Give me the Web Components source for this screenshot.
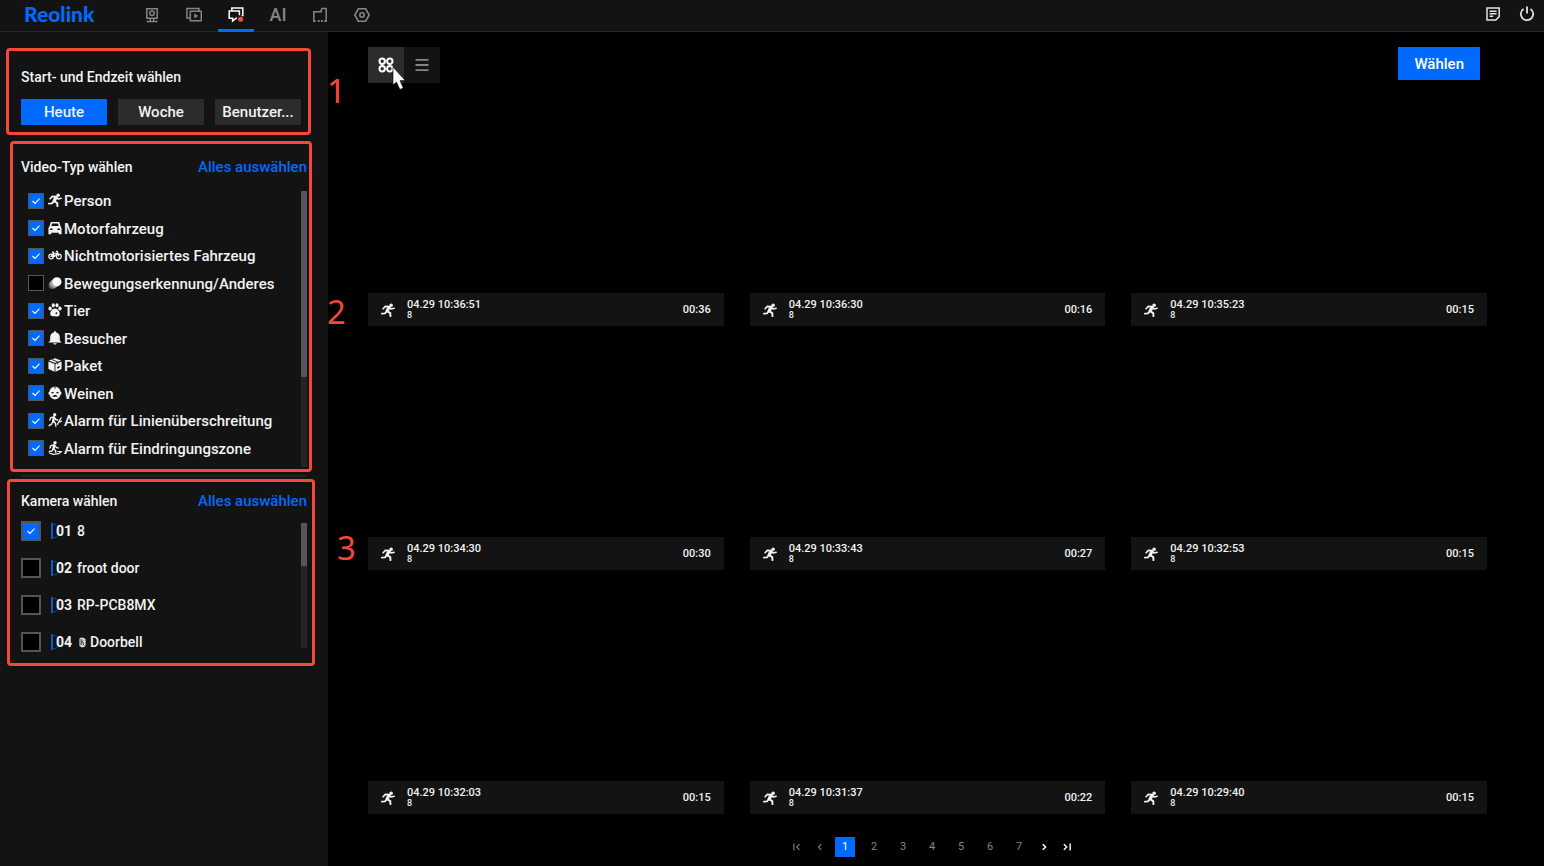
<!DOCTYPE html>
<html lang="de">
<head>
<meta charset="utf-8">
<title>Reolink</title>
<style>
  :root {
    --blue: #006aff;
    --panel: #131313;
    --line: #272727;
    --control: #2c2c2c;
    --note: #f4483b;
  }
  html, body {
    height: 100%;
    margin: 0;
  }
  body {
    background: #000;
    color: #f2f2f2;
    font: 500 15px/20px Roboto, "Liberation Sans", sans-serif;
  }
</style>
</head>
<body>
<recordings-app></recordings-app>

<script>
const ICONS = {
  camera: '<g fill="none" stroke="currentColor" stroke-width="1.5"><path d="M2.800 1.800h10.400v9.400H2.800z"/><circle cx="8" cy="6.300" r="2.200"/><path d="M6.300 11.400v3M9.700 11.400v3M2.500 14.600h11"/></g>',
  playback: '<g fill="none" stroke="currentColor" stroke-width="1.5"><path d="M4.300 4.300h11v9.400h-11z"/><path d="M13 4V1.500H.9V11h3"/></g><path d="M8.300 6.400v5.200l4-2.600z" fill="currentColor"/>',
  alarm: '<g fill="none" stroke="currentColor" stroke-width="1.5"><path d="M9 11.300H8L4.600 14V11.300H1.200V4.100h10.200v4.200"/><path d="M3.800 4V1h11v7.600h-1.200"/></g><circle cx="12.600" cy="12.200" r="2.500" fill="#f5503f"/>',
  store: '<path d="M3.800 14.200H1.800V4.800h7.400V2.800L10.200 1.600h4v12.600h-2" fill="none" stroke="currentColor" stroke-width="1.500"/><path d="M5.800 13h1.800v2H5.800zM9 13h1.800v2H9z" fill="currentColor"/>',
  settings: '<g fill="none" stroke="currentColor" stroke-width="1.600"><path d="M4.400 1.800h7.200L15.200 8l-3.600 6.200H4.400L.8 8z"/><circle cx="8" cy="8" r="2.200"/></g>',
  notes: '<g fill="none" stroke="currentColor" stroke-width="1.500"><path d="M2 2h12.200v8.600L10.800 14H2z"/><path d="M4.600 5.200h7M4.600 7.700h7M4.600 10.200h3.600"/></g>',
  power: '<g fill="none" stroke="currentColor" stroke-width="1.800"><path d="M4.500 2.900a6.200 6.200 0 1 0 7 0"/><path d="M8 .6v7"/></g>',
  grid: '<g fill="none" stroke="currentColor" stroke-width="2"><circle cx="4.200" cy="4.200" r="2.700"/><circle cx="11.800" cy="4.200" r="2.700"/><circle cx="4.200" cy="11.800" r="2.700"/><circle cx="11.800" cy="11.800" r="2.700"/></g>',
  list: '<path d="M1.500 2.800h13M1.500 8h13M1.500 13.200h13" stroke="currentColor" stroke-width="1.800"/>',
  person: '<g fill="none" stroke="currentColor" stroke-linejoin="round" stroke-linecap="round"><path d="M9.200 5 7 9" stroke-width="3.600"/><path d="M9 4.200 5 3.900 2.400 6.600M10 5.400l1.800 1.500 3.200-.9" stroke-width="1.900"/><path d="m7.400 9.400 3.200 2.200.2 3.400M6.500 9.600l-2 2.300-3.500.2" stroke-width="2.200"/></g><circle cx="11.600" cy="2.500" r="2" fill="currentColor"/>',
  car: '<path fill="currentColor" fill-rule="evenodd" d="M3.200 1h9.600l1.600 5.400L15.500 8v7h-3.200v-1.600H3.700V15H.5V8l1.100-1.600zM4.700 2.800l-.9 3h8.400l-.9-3zM2.400 8.600v1.700h2.800V8.600zM10.800 8.600v1.700h2.800V8.600z"/>',
  bike: '<g fill="none" stroke="currentColor" stroke-width="1.400"><circle cx="3.600" cy="9.600" r="2.700"/><circle cx="12.400" cy="9.600" r="2.700"/><path d="M3.600 9.600 6 6h4.600l-3 3.600zM6 6l1.800 3.600M9 3.800h1.500l1.900 5.800M4.600 4.600h2.300"/></g>',
  motion: '<circle cx="5.300" cy="10.200" r="4.600" fill="#666"/><circle cx="7.300" cy="8.600" r="4.800" fill="#aaa"/><circle cx="10.200" cy="6.600" r="5.200" fill="#fff"/>',
  animal: '<g fill="currentColor"><ellipse cx="2.400" cy="6.200" rx="1.900" ry="2.300"/><ellipse cx="6" cy="2.700" rx="1.800" ry="2.300"/><ellipse cx="10.300" cy="2.700" rx="1.800" ry="2.300"/><ellipse cx="13.700" cy="6.200" rx="1.900" ry="2.300"/><path d="M8 6.200c3 0 5.400 3.200 5.400 6 0 3.600-3.200 3.400-5.400 3s-5.400.6-5.400-3c0-2.800 2.400-6 5.400-6z"/></g><circle cx="9.600" cy="11.600" r="1" fill="#131313"/>',
  visitor: '<path fill="currentColor" d="M8 .3c.8 0 1.300.6 1.300 1.300 2.700.6 4.200 2.700 4.200 5.200v4l2 2.400H.5l2-2.400v-4c0-2.500 1.500-4.600 4.200-5.200C6.700.9 7.200.3 8 .3zM6 14h4c-.3 2-3.700 2-4 0z"/>',
  parcel: '<path fill="currentColor" d="m8 .2 7 2.600-7 2.900L1 2.800zM.5 3.900l7 2.900v9l-7-3.100zM15.500 3.900v8.800l-7 3.100v-9z"/><path d="m4.300 1.700 6.800 2.800v2.800" stroke="#131313" stroke-width="1" fill="none"/><path d="m10.500 10.300 2.800-1.200v2l-2.800 1.200z" fill="#131313"/>',
  cry: '<path fill="currentColor" d="M8 .8c3.600 0 6 2.600 6.300 5.600 1.700.5 1.700 3.200 0 3.700-.6 2.900-3.300 5.300-6.300 5.300s-5.700-2.400-6.300-5.300C0 9.600 0 6.900 1.700 6.400 2 3.400 4.400.8 8 .8z"/><path d="M4 7.600h2.400M9.600 7.600H12" stroke="#131313" stroke-width="1.600"/><path d="M5 12.400c1-2.800 5-2.800 6 0z" fill="#131313"/><path d="M8 .6v2.600" stroke="#131313"/>',
  line: '<g fill="none" stroke="currentColor" stroke-linecap="round" stroke-linejoin="round"><path d="m6.700 5-.7 4.400" stroke-width="2.800"/><path d="M6.300 4.400 3.200 5.300 2 8M7.300 5l1.900 2.700 2 .3M6 9.400l2.500 2.200.5 3.400M5.600 9.500l-1.300 3-3 2" stroke-width="1.600"/><path d="M15 5.500 10.800 13M12.500 10.600l3-1.300" stroke-width="1.400"/></g><circle cx="7.600" cy="2" r="1.900" fill="currentColor"/>',
  zone: '<g fill="none" stroke="currentColor" stroke-linecap="round" stroke-linejoin="round"><path d="m7 5-.7 4" stroke-width="2.800"/><path d="M6.500 4.400 3.400 5.300 2.200 8M7.700 5l2 2.600 2 .3M6.200 9.200l2.400 1.700.3 2M5.800 9.300 4.500 11.500l-3 .3" stroke-width="1.600"/><path d="m1.500 13.700 4.500 1.500 6.500-.8 3-2.400H11" stroke-width="1.400"/></g><circle cx="8" cy="2" r="1.900" fill="currentColor"/>',
  doorbell: '<path fill="#dcdcdc" d="M4.500 1h5.500l2.500 2.500v9L10 15H6l-2.500-2.500V3z"/><path d="M6 3v9M9.500 4.500c-3 2-2 4 .2 3.500M8.500 9l2 3.500" fill="none" stroke="#222" stroke-width="1.400"/>',
  field: '<path d="M1 0v16" stroke="#0a6cf0" stroke-width="1.600"/><path d="M1 1c9 0 11 14 0 14" fill="none" stroke="#0b4a9c" stroke-width="1"/>',
  first: '<path d="M3 2.500v11M12 3.500 7.500 8l4.500 4.500" fill="none" stroke="currentColor" stroke-width="1.700"/>',
  prev: '<path d="M10 3.500 5.500 8l4.500 4.500" fill="none" stroke="currentColor" stroke-width="1.700"/>',
  next: '<path d="M6 3.500 10.500 8 6 12.500" fill="none" stroke="currentColor" stroke-width="2.400"/>',
  last: '<path d="M3 3.500 7.500 8 3 12.500M13 2.500v11" fill="none" stroke="currentColor" stroke-width="2.200"/>'
};

class UiIcon extends HTMLElement {
  constructor() {
    super();
    this.attachShadow({ mode: 'open' });
  }

  connectedCallback() {
    this.shadowRoot.innerHTML = `
      <style>
        :host { display: block; flex: none; width: var(--size, 16px); height: var(--size, 16px); }
        svg { display: block; width: 100%; height: 100%; }
      </style>
      <svg viewBox="0 0 16 16" aria-hidden="true">${ICONS[this.getAttribute('name')] || ''}</svg>
    `;
  }
}

class TopBar extends HTMLElement {
  constructor() {
    super();
    this.attachShadow({ mode: 'open' });
    this.tabs = [
      ['camera', 'Live'], ['playback', 'Wiedergabe'], ['alarm', 'Alarme'],
      ['ai', 'AI'], ['store', 'Speicher'], ['settings', 'Einstellungen']
    ];
  }

  connectedCallback() {
    this.shadowRoot.innerHTML = `
      <style>
        :host { display: block; background: var(--panel); border-bottom: 1px solid var(--line); }
        header { display: flex; align-items: flex-start; height: 31px; padding-left: 24px; }
        .logo { width: 110px; color: var(--blue); font: 900 21px/28px Lato, sans-serif; text-decoration: none; }
        nav { display: flex; gap: 6px; flex: 1; }
        button {
          display: flex; align-items: center; justify-content: center;
          box-sizing: border-box; width: 36px; height: 32px; padding: 0 0 2px;
          border: 0; background: none; color: #858585; font: 500 18px/20px Roboto, sans-serif;
        }
        nav button[aria-current] { color: #fff; box-shadow: inset 0 -3px var(--blue); }
        .tools { display: flex; color: #e4e4e4; }
        .tools button { width: 34px; color: inherit; padding-bottom: 5px; }
        ui-icon { --size: 16px; }
      </style>
      <header>
        <a class="logo" href="#">Reolink</a>
        <nav>
          ${this.tabs.map(([name, label]) => `
            <button type="button" aria-label="${label}" ${name === 'alarm' ? 'aria-current="page"' : ''}>
              ${name === 'ai' ? 'AI' : `<ui-icon name="${name}"></ui-icon>`}
            </button>`).join('')}
        </nav>
        <div class="tools">
          <button type="button" aria-label="Protokoll"><ui-icon name="notes"></ui-icon></button>
          <button type="button" aria-label="Ausschalten"><ui-icon name="power"></ui-icon></button>
        </div>
      </header>
    `;
  }
}

// Title row with an optional "select all" link, content in the default slot
class FilterSection extends HTMLElement {
  constructor() {
    super();
    this.attachShadow({ mode: 'open' });
  }

  connectedCallback() {
    const all = this.getAttribute('all');
    this.shadowRoot.innerHTML = `
      <style>
        :host { display: block; }
        .head { display: flex; justify-content: space-between; }
        h2 { margin: 0; font-size: 14px; font-weight: 500; }
        a { color: var(--blue); text-decoration: none; }
      </style>
      <div class="head">
        <h2>${this.getAttribute('heading')}</h2>
        ${all ? `<a href="#">${all}</a>` : ''}
      </div>
      <slot></slot>
    `;
  }
}

class CheckRow extends HTMLElement {
  constructor() {
    super();
    this.attachShadow({ mode: 'open' });
  }

  connectedCallback() {
    const icon = this.getAttribute('icon');
    const number = this.getAttribute('number');
    this.shadowRoot.innerHTML = `
      <style>
        :host { display: flex; align-items: center; }
        label { display: flex; align-items: center; }
        input {
          appearance: none; box-sizing: border-box; flex: none;
          width: var(--box, 16px); height: var(--box, 16px); margin: 0 var(--row-gap, 4px) 0 0;
          border: var(--box-border, 1px) solid #555; background: #000;
        }
        input:checked {
          background: var(--blue) url("data:image/svg+xml,%3Csvg xmlns='http://www.w3.org/2000/svg' viewBox='0 0 16 16'%3E%3Cpath d='m4.500 8 2.500 2.500 4.500-4.800' fill='none' stroke='%23fff' stroke-width='1.100'/%3E%3C/svg%3E") center / 16px no-repeat;
        }
        .name { display: flex; align-items: center; gap: 2px; padding-top: var(--text-drop, 1px); }
        .name ui-icon { --size: 14px; margin-bottom: 2px; }
        .door ui-icon { --size: 11px; margin-bottom: 0; }
        .channel { display: grid; align-items: center; width: 26px; padding-top: 1px; font-weight: 700; }
        .channel > * { grid-area: 1 / 1; }
        .channel span { padding-left: 5px; }
      </style>
      <label>
        <input type="checkbox" ${this.hasAttribute('checked') ? 'checked' : ''}>
        ${number ? `<span class="channel"><ui-icon name="field"></ui-icon><span>${number}</span></span>` : ''}
        <span class="name ${number ? 'door' : ''}">${icon ? `<ui-icon name="${icon}"></ui-icon>` : ''}<span><slot></slot></span></span>
      </label>
    `;
  }
}

class ScrollList extends HTMLElement {
  constructor() {
    super();
    this.attachShadow({ mode: 'open' });
    this.shadowRoot.innerHTML = `
      <style>
        :host { display: flex; justify-content: space-between; }
        .rows { display: grid; grid-auto-rows: 1fr; height: var(--list-height); }
        .track { width: 6px; height: var(--track); margin-top: var(--track-top); background: #242424; }
        .thumb { height: var(--thumb); background: #54565b; }
      </style>
      <div class="rows"><slot></slot></div>
      <div class="track"><div class="thumb"></div></div>
    `;
  }
}

class FilterPanel extends HTMLElement {
  constructor() {
    super();
    this.attachShadow({ mode: 'open' });
    this.types = [
      ['person', 'Person', true],
      ['car', 'Motorfahrzeug', true],
      ['bike', 'Nichtmotorisiertes Fahrzeug', true],
      ['motion', 'Bewegungserkennung/Anderes', false],
      ['animal', 'Tier', true],
      ['visitor', 'Besucher', true],
      ['parcel', 'Paket', true],
      ['cry', 'Weinen', true],
      ['line', 'Alarm für Linienüberschreitung', true],
      ['zone', 'Alarm für Eindringungszone', true]
    ];
    this.cameras = [
      ['01', '8', true], ['02', 'froot door', false],
      ['03', 'RP-PCB8MX', false], ['04', 'Doorbell', false, 'doorbell']
    ];
  }

  connectedCallback() {
    this.shadowRoot.innerHTML = `
      <style>
        :host { display: block; box-sizing: border-box; width: 328px; flex: none; padding: 35px 21px 20px 21px; background: var(--panel); }
        .range { display: grid; grid-template-columns: repeat(3, 1fr); gap: 11px; margin: 12px 6px 32px 0; }
        .range button { height: 26px; padding: 0; border: 0; background: var(--control); color: inherit; font: inherit; }
        .range button[aria-pressed="true"] { background: var(--blue); }
        .types { --list-height: 275px; --track: 276px; --track-top: 4px; --thumb: 186px; margin-top: 10px; padding-left: 7px; }
        .cameras { --list-height: 148px; --track: 125px; --track-top: 11px; --thumb: 43px; --box: 20px; --box-border: 2px; --row-gap: 10px; margin-top: 1px; font-size: 14px; }
        hr { height: 2px; margin: 8px 0 14px; border: 0; background: #222; }
      </style>
      <filter-section heading="Start- und Endzeit wählen">
        <div class="range">
          <button type="button" aria-pressed="true">Heute</button>
          <button type="button" aria-pressed="false">Woche</button>
          <button type="button" aria-pressed="false">Benutzer...</button>
        </div>
      </filter-section>
      <filter-section heading="Video-Typ wählen" all="Alles auswählen">
        <scroll-list class="types">
          ${this.types.map(([icon, name, on]) => `<check-row icon="${icon}" ${on ? 'checked' : ''}>${name}</check-row>`).join('')}
        </scroll-list>
      </filter-section>
      <hr>
      <filter-section heading="Kamera wählen" all="Alles auswählen">
        <scroll-list class="cameras">
          ${this.cameras.map(([no, name, on, icon]) => `<check-row number="${no}" ${icon ? `icon="${icon}"` : ''} ${on ? 'checked' : ''}>${name}</check-row>`).join('')}
        </scroll-list>
      </filter-section>
    `;
  }
}

class ClipCard extends HTMLElement {
  constructor() {
    super();
    this.attachShadow({ mode: 'open' });
  }

  connectedCallback() {
    this.shadowRoot.innerHTML = `
      <style>
        :host { display: block; }
        .still { aspect-ratio: 16 / 9; background: #000; }
        .bar { display: flex; align-items: center; height: 33px; padding: 0 13px 0 13px; background: var(--panel); font-size: 11px; }
        ui-icon { --size: 14px; margin-right: 12px; }
        .info { flex: 1; line-height: 11px; }
        .camera { display: block; font-size: 9px; }
      </style>
      <div class="still"></div>
      <div class="bar">
        <ui-icon name="person"></ui-icon>
        <div class="info"><time>${this.getAttribute('time')}</time><span class="camera">8</span></div>
        <span>${this.getAttribute('length')}</span>
      </div>
    `;
  }
}

class PageNav extends HTMLElement {
  constructor() {
    super();
    this.attachShadow({ mode: 'open' });
  }

  connectedCallback() {
    const pages = Array.from({ length: parseInt(this.getAttribute('pages')) || 1 }, (_, i) => i + 1);
    this.shadowRoot.innerHTML = `
      <style>
        :host { display: block; }
        nav { display: flex; align-items: center; justify-content: center; gap: 7px; }
        .pages { display: flex; gap: 9px; }
        button { width: 20px; height: 20px; padding: 0; border: 0; background: none; color: #858585; font: 400 11px/20px Roboto, sans-serif; }
        button[aria-current] { background: var(--blue); color: #fff; }
        .arrow { display: flex; align-items: center; justify-content: center; width: 16px; color: #fff; }
        .arrow:disabled { color: #858585; }
        ui-icon { --size: 10px; }
      </style>
      <nav aria-label="Seiten">
        <button type="button" class="arrow" aria-label="Erste" disabled><ui-icon name="first"></ui-icon></button>
        <button type="button" class="arrow" aria-label="Zurück" disabled><ui-icon name="prev"></ui-icon></button>
        <div class="pages">
          ${pages.map(n => `<button type="button" ${n === 1 ? 'aria-current="page"' : ''}>${n}</button>`).join('')}
        </div>
        <button type="button" class="arrow" aria-label="Weiter"><ui-icon name="next"></ui-icon></button>
        <button type="button" class="arrow" aria-label="Letzte"><ui-icon name="last"></ui-icon></button>
      </nav>
    `;
  }
}

class ClipBrowser extends HTMLElement {
  constructor() {
    super();
    this.attachShadow({ mode: 'open' });
    this.clips = [
      ['04.29 10:36:51', '00:36'], ['04.29 10:36:30', '00:16'], ['04.29 10:35:23', '00:15'],
      ['04.29 10:34:30', '00:30'], ['04.29 10:33:43', '00:27'], ['04.29 10:32:53', '00:15'],
      ['04.29 10:32:03', '00:15'], ['04.29 10:31:37', '00:22'], ['04.29 10:29:40', '00:15']
    ];
  }

  connectedCallback() {
    this.shadowRoot.innerHTML = `
      <style>
        :host { display: block; flex: 1; min-width: 0; padding: 15px 57px 8px 40px; }
        .tools { display: flex; justify-content: space-between; align-items: flex-start; padding-right: 7px; }
        .views { display: flex; position: relative; }
        .views button {
          display: flex; align-items: center; justify-content: center;
          width: 36px; height: 36px; padding: 0; border: 0; background: var(--panel); color: #858585;
        }
        .views button[aria-pressed="true"] { background: var(--control); color: #fff; }
        .pointer { position: absolute; left: 24px; top: 19px; width: 15px; height: 25px; }
        .choose { height: 33px; padding: 0 16px; border: 0; background: var(--blue); color: #fff; font: inherit; }
        .clips { display: grid; grid-template-columns: repeat(3, 1fr); gap: 11px 26px; margin-top: 10px; }
        page-nav { margin-top: 23px; padding-left: 9px; }
      </style>
      <div class="tools">
        <div class="views">
          <button type="button" aria-label="Kacheln" aria-pressed="true"><ui-icon name="grid"></ui-icon></button>
          <button type="button" aria-label="Liste" aria-pressed="false"><ui-icon name="list"></ui-icon></button>
          <svg class="pointer" viewBox="0 0 15 25" aria-hidden="true">
            <path d="M1 1v18l3.500-3 3.400 7.500 3.400-1.600L8 14.700l5-.5z" fill="#fff" stroke="#000" stroke-width=".6"/>
          </svg>
        </div>
        <button type="button" class="choose">Wählen</button>
      </div>
      <div class="clips">
        ${this.clips.map(([time, length]) => `<clip-card time="${time}" length="${length}"></clip-card>`).join('')}
      </div>
      <page-nav pages="7"></page-nav>
    `;
  }
}

// Red frame with its step number, drawn over the page
class StepNote extends HTMLElement {
  constructor() {
    super();
    this.attachShadow({ mode: 'open' });
    this.shadowRoot.innerHTML = `
      <style>
        :host {
          position: absolute; box-sizing: border-box; pointer-events: none;
          border: 3px solid var(--note); border-radius: 4px;
          color: var(--note); font: 400 33px/40px "Noto Sans", sans-serif;
        }
        span { position: absolute; left: var(--num-x); top: var(--num-y); }
      </style>
      <span><slot></slot></span>
    `;
  }
}

class RecordingsApp extends HTMLElement {
  constructor() {
    super();
    this.attachShadow({ mode: 'open' });
    this.shadowRoot.innerHTML = `
      <style>
        :host { display: flex; flex-direction: column; min-height: 100%; position: relative; }
        main { display: flex; flex: 1; }
        .range { left: 6px; top: 48px; width: 305px; height: 87px; --num-x: 318px; --num-y: 20px; }
        .types { left: 10px; top: 141px; width: 302px; height: 331px; --num-x: 314px; --num-y: 148px; }
        .cameras { left: 7px; top: 479px; width: 308px; height: 187px; --num-x: 327px; --num-y: 46px; }
      </style>
      <top-bar></top-bar>
      <main>
        <filter-panel></filter-panel>
        <clip-browser></clip-browser>
      </main>
      <step-note class="range">1</step-note>
      <step-note class="types">2</step-note>
      <step-note class="cameras">3</step-note>
    `;
  }
}

customElements.define('ui-icon', UiIcon);
customElements.define('top-bar', TopBar);
customElements.define('filter-section', FilterSection);
customElements.define('check-row', CheckRow);
customElements.define('scroll-list', ScrollList);
customElements.define('filter-panel', FilterPanel);
customElements.define('clip-card', ClipCard);
customElements.define('page-nav', PageNav);
customElements.define('clip-browser', ClipBrowser);
customElements.define('step-note', StepNote);
customElements.define('recordings-app', RecordingsApp);
</script>
</body>
</html>
